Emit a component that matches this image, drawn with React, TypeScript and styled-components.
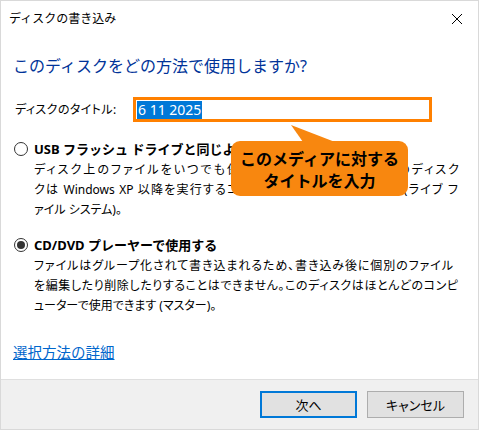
import styled, { createGlobalStyle } from "styled-components";

const GlobalStyle = createGlobalStyle`
  html, body {
    margin: 0;
    padding: 0;
    background: #ffffff;
  }
  body {
    font-family: "Noto Sans", "Noto Sans CJK JP", sans-serif;
    color: #000000;
  }
`;

const Window = styled.div`
  position: relative;
  width: 479px;
  height: 430px;
  box-sizing: border-box;
  border: 1px solid #d9d9d9;
  background: #ffffff;
  display: flex;
  flex-direction: column;
  overflow: hidden;
`;

const TitleBar = styled.div`
  height: 36px;
  display: flex;
  align-items: center;
  justify-content: space-between;
  padding-left: 8px;
`;

const TitleText = styled.span`
  font-size: 12px;
  line-height: 16px;
`;

const CloseButton = styled.div`
  width: 42px;
  height: 36px;
  display: flex;
  align-items: center;
  justify-content: center;
`;

const Main = styled.div`
  flex: 1;
  padding: 18px 12px 0 12px;
  display: flex;
  flex-direction: column;
`;

const Heading = styled.h1`
  margin: 0;
  font-size: 16px;
  line-height: 22px;
  font-weight: 400;
  color: #003399;
`;

const TitleRow = styled.div`
  margin-top: 20px;
  padding-left: 2px;
  display: grid;
  grid-template-columns: 118px 299px;
  align-items: center;
`;

const FieldLabel = styled.span`
  font-size: 12px;
  line-height: 16px;
  font-feature-settings: "palt";
  letter-spacing: 0.4px;
`;

const TitleInput = styled.div`
  height: 25px;
  box-sizing: border-box;
  border: 3px solid #ff8000;
  padding-left: 1px;
  display: flex;
  align-items: center;
`;

const Selection = styled.span`
  background: #0078d7;
  color: #ffffff;
  font-size: 14px;
  line-height: 18px;
  padding: 0 1px;
`;

const Option = styled.div<{ $gap: number }>`
  margin-top: ${(p) => p.$gap}px;
  padding-left: 1px;
  display: grid;
  grid-template-columns: 20px 1fr;
`;

const Radio = styled.span<{ $checked?: boolean }>`
  width: 14px;
  height: 14px;
  margin-top: 3px;
  box-sizing: border-box;
  border: 1px solid #333333;
  border-radius: 50%;
  background: #ffffff;
  display: flex;
  align-items: center;
  justify-content: center;

  &::after {
    content: "";
    width: 8px;
    height: 8px;
    border-radius: 50%;
    background: #333333;
    display: ${(p) => (p.$checked ? "block" : "none")};
  }
`;

const OptionLabel = styled.div`
  font-size: 13px;
  line-height: 20px;
  font-weight: 700;
`;

const Description = styled.div`
  margin-top: 1px;
  grid-column: 2;
  font-size: 12px;
  line-height: 20px;
  font-feature-settings: "palt";
`;

const DescLine = styled.div<{ $w?: number }>`
  width: ${(p) => (p.$w ? `${p.$w}px` : "auto")};
  text-align: ${(p) => (p.$w ? "justify" : "left")};
  text-align-last: ${(p) => (p.$w ? "justify" : "left")};
  white-space: nowrap;
`;

const MoreLink = styled.a`
  margin-top: 26px;
  align-self: flex-start;
  font-size: 14.5px;
  line-height: 20px;
  color: #0066cc;
  text-decoration: underline;
  cursor: pointer;
`;

const Footer = styled.div`
  height: 50px;
  box-sizing: border-box;
  border-top: 1px solid #dfdfdf;
  background: #f0f0f0;
  display: flex;
  justify-content: flex-end;
  align-items: flex-start;
  gap: 10px;
  padding: 11px 14px 0 0;
`;

const Button = styled.button<{ $primary?: boolean }>`
  width: 97px;
  height: 27px;
  box-sizing: border-box;
  margin: 0;
  padding: 0;
  background: #e1e1e1;
  border: ${(p) => (p.$primary ? "2px solid #0078d7" : "1px solid #adadad")};
  font-family: "Noto Sans", "Noto Sans CJK JP", sans-serif;
  font-size: 13px;
  font-feature-settings: "palt";
  color: #000000;
`;

const Callout = styled.div`
  position: absolute;
  left: 230px;
  top: 140px;
  width: 177px;
  height: 55px;
  box-sizing: border-box;
  padding-top: 6px;
  border-radius: 9px;
  background: #f8870f;
  display: flex;
  flex-direction: column;
  align-items: center;
`;

const CalloutLine = styled.span`
  font-family: "Noto Sans CJK JP", sans-serif;
  font-size: 16px;
  line-height: 22px;
  font-weight: 700;
  color: #000000;
`;

const CalloutTail = styled.svg`
  position: absolute;
  left: 58px;
  top: -16px;
`;

export default function App() {
  return (
    <>
      <GlobalStyle />
      <Window>
        <TitleBar>
          <TitleText>ディスクの書き込み</TitleText>
          <CloseButton>
            <svg width="12" height="12" viewBox="0 0 12 12">
              <path d="M1 1 L11 11 M11 1 L1 11" stroke="#000" strokeWidth="1" />
            </svg>
          </CloseButton>
        </TitleBar>
        <Main>
          <Heading>このディスクをどの方法で使用しますか?</Heading>
          <TitleRow>
            <FieldLabel>ディスクのタイトル:</FieldLabel>
            <TitleInput>
              <Selection>6 11 2025</Selection>
            </TitleInput>
          </TitleRow>

          <Option $gap={17}>
            <Radio />
            <OptionLabel>USB フラッシュ ドライブと同じように使用する</OptionLabel>
            <Description>
              <DescLine $w={425}>ディスク上のファイルをいつでも保存、編集、削除できます。このディスク</DescLine>
              <DescLine $w={424}>クは Windows XP 以降を実行するコンピューターで使用できます (ライブ フ</DescLine>
              <DescLine>ァイル システム)。</DescLine>
            </Description>
          </Option>

          <Option $gap={15}>
            <Radio $checked />
            <OptionLabel>CD/DVD プレーヤーで使用する</OptionLabel>
            <Description>
              <DescLine $w={419}>ファイルはグループ化されて書き込まれるため、書き込み後に個別のファイル</DescLine>
              <DescLine $w={424}>を編集したり削除したりすることはできません。このディスクはほとんどのコンピ</DescLine>
              <DescLine>ューターで使用できます (マスター)。</DescLine>
            </Description>
          </Option>

          <MoreLink>選択方法の詳細</MoreLink>
        </Main>
        <Footer>
          <Button $primary>次へ</Button>
          <Button>キャンセル</Button>
        </Footer>

        <Callout>
          <CalloutTail width="48" height="17" viewBox="0 0 48 17">
            <polygon points="2,0 14,17 46,17" fill="#f8870f" />
          </CalloutTail>
          <CalloutLine>このメディアに対する</CalloutLine>
          <CalloutLine>タイトルを入力</CalloutLine>
        </Callout>
      </Window>
    </>
  );
}
